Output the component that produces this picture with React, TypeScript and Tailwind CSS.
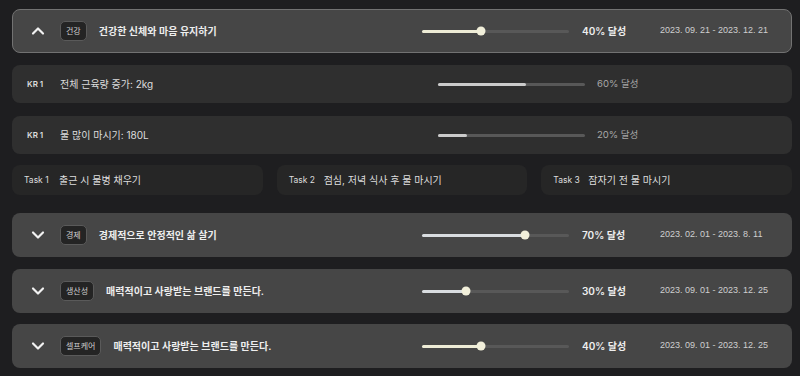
import { ChevronDown, ChevronUp } from 'lucide-react'

type Goal = { tag: string; title: string; pct: number; date: string; fill: string; open?: boolean }

const GOALS: Goal[] = [
  { tag: '건강', title: '건강한 신체와 마음 유지하기', pct: 40, date: '2023. 09. 21 - 2023. 12. 21', fill: 'bg-[#eeecd6]', open: true },
  { tag: '경제', title: '경제적으로 안정적인 삶 살기', pct: 70, date: '2023. 02. 01 - 2023. 8. 11', fill: 'bg-[#d9dde0]' },
  { tag: '생산성', title: '매력적이고 사랑받는 브랜드를 만든다.', pct: 30, date: '2023. 09. 01 - 2023. 12. 25', fill: 'bg-[#d9dde0]' },
  { tag: '셀프케어', title: '매력적이고 사랑받는 브랜드를 만든다.', pct: 40, date: '2023. 09. 01 - 2023. 12. 25', fill: 'bg-[#eeecd6]' },
]

const KRS = [
  { label: 'KR 1', title: '전체 근육량 증가: 2kg', pct: 60 },
  { label: 'KR 1', title: '물 많이 마시기: 180L', pct: 20 },
]

const TASKS = [
  { label: 'Task 1', title: '출근 시 물병 채우기' },
  { label: 'Task 2', title: '점심, 저녁 식사 후 물 마시기' },
  { label: 'Task 3', title: '잠자기 전 물 마시기' },
]

const font = { fontFamily: 'Inter, "Noto Sans CJK KR", sans-serif' }
const dateFont = { fontFamily: '"Liberation Sans", Arial, sans-serif' }

function Bar({ pct, fill, thumb }: { pct: number; fill: string; thumb?: boolean }) {
  return (
    <div className="relative w-[147px] shrink-0 h-[3px] rounded-full bg-[#585858]">
      <div className={`absolute left-0 top-0 h-full rounded-full ${fill}`} style={{ width: `${pct}%` }} />
      {thumb && (
        <div className="absolute top-1/2 w-[9px] h-[9px] -translate-x-1/2 -translate-y-1/2 rounded-full bg-[#f1efda]" style={{ left: `${pct}%` }} />
      )}
    </div>
  )
}

function GoalCard({ g, className }: { g: Goal; className?: string }) {
  const Icon = g.open ? ChevronUp : ChevronDown
  return (
    <div className={`h-[44px] shrink-0 flex items-center rounded-lg bg-[#464646] ${g.open ? 'border border-[#727272]' : 'border border-transparent'} ${className ?? ''}`}>
      <div className="pl-[15px] text-[#f2f2f2]">
        <Icon size={20} strokeWidth={2.6} />
      </div>
      <span className="ml-[12px] h-[20px] px-[5px] flex items-center rounded-[5px] border border-[#5a5a5a] bg-[#242424] text-[8px] text-[#d0d0d0]">{g.tag}</span>
      <span className="ml-[12px] flex-1 min-w-0 text-[10px] font-semibold text-[#eeeeee]">{g.title}</span>
      <Bar pct={g.pct} fill={g.fill} thumb />
      <span className="ml-[13px] w-[78px] shrink-0 text-[10px] font-semibold text-[#eeeeee]">{g.pct}% 달성</span>
      <span className="w-[131px] shrink-0 text-[9px] text-[#cfcfcf] whitespace-nowrap overflow-hidden" style={dateFont}>{g.date}</span>
    </div>
  )
}

export default function App() {
  return (
    <div className="w-[800px] h-[376px] overflow-hidden bg-[#1e1e20] pl-3 pr-2 pt-[9px] flex flex-col" style={font}>
      <GoalCard g={GOALS[0]} />

      {KRS.map((k, i) => (
        <div key={i} className={`h-[38px] shrink-0 flex items-center rounded-lg bg-[#2f2f2f] pl-[15px] ${i === 0 ? 'mt-[12px]' : 'mt-[13px]'}`}>
          <span className="w-[33px] text-[8px] font-semibold text-[#dddddd]">{k.label}</span>
          <span className="flex-1 text-[10px] text-[#dddddd]">{k.title}</span>
          <Bar pct={k.pct} fill="bg-[#cbcbcb]" />
          <span className="ml-[12px] w-[195px] shrink-0 text-[9.5px] text-[#a8a8a8]">{k.pct}% 달성</span>
        </div>
      ))}

      <div className="mt-[11px] grid grid-cols-3 gap-[14px]">
        {TASKS.map((t) => (
          <div key={t.label} className="h-[30px] flex items-center rounded-lg bg-[#262626] pl-3">
            <span className="w-[35px] text-[8.5px] text-[#dddddd]">{t.label}</span>
            <span className="text-[10px] text-[#dddddd]">{t.title}</span>
          </div>
        ))}
      </div>

      <GoalCard g={GOALS[1]} className="mt-[18px]" />
      <GoalCard g={GOALS[2]} className="mt-[12px]" />
      <GoalCard g={GOALS[3]} className="mt-[11px]" />
    </div>
  )
}
